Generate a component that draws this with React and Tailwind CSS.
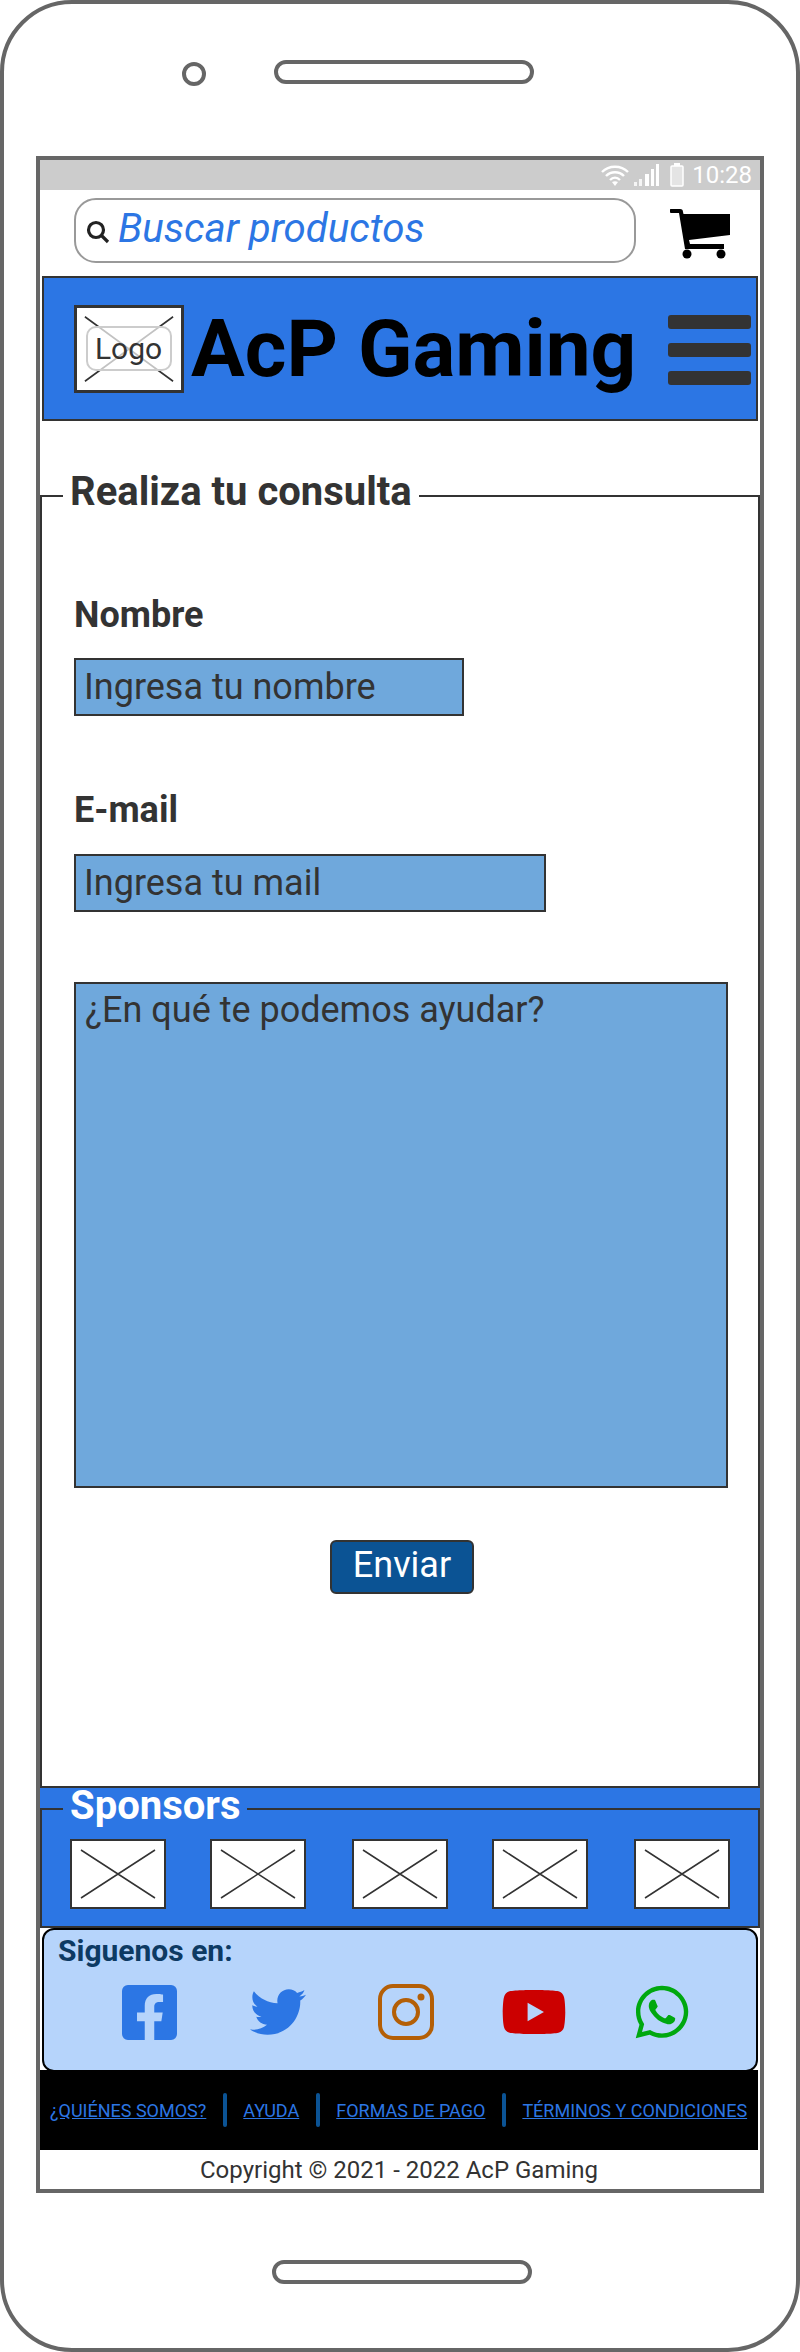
import { FaFacebookSquare, FaTwitter, FaYoutube, FaWhatsapp } from 'react-icons/fa';

const Wifi = () => (
  <svg width="28" height="22" viewBox="0 0 28 22" fill="none" stroke="#fff" strokeWidth="2.4">
    <path d="M1 8 C8 1 20 1 27 8" />
    <path d="M5 12 C10 7 18 7 23 12" />
    <path d="M9 16 C12 13 16 13 19 16" />
    <path d="M11 18 L14 22 L17 18 C15 17 13 17 11 18 Z" fill="#fff" stroke="none" />
  </svg>
);

const Signal = () => (
  <svg width="25" height="22" viewBox="0 0 25 22" fill="#fff">
    <rect x="0" y="18" width="3" height="4" opacity="0.8" />
    <rect x="5" y="15" width="3" height="7" opacity="0.8" />
    <rect x="11" y="10" width="4" height="12" />
    <rect x="17" y="5" width="3" height="17" />
    <rect x="22" y="0" width="3" height="22" />
  </svg>
);

const Battery = () => (
  <svg width="14" height="24" viewBox="0 0 14 24" fill="none" stroke="#fff" strokeWidth="1.5">
    <rect x="4" y="0" width="6" height="3" fill="#fff" stroke="none" />
    <rect x="1" y="3" width="12" height="20" rx="1" fill="#e4e4e4" />
  </svg>
);

const Cart = () => (
  <svg width="60" height="50" viewBox="0 0 60 50" fill="#000">
    <path d="M1 0 H10 C12 0 13 1 13 3 L13.5 5 H60 V26 L19 31 L20 35 H54 V40 H15 L9 4 H1 C-1 4 -1 0 1 0 Z" />
    <circle cx="17" cy="45" r="4.5" />
    <circle cx="51" cy="45" r="4.5" />
  </svg>
);

const CrossBox = ({ className, inset = 10 }) => (
  <svg className={className} viewBox="0 0 92 66" preserveAspectRatio="none" fill="none" stroke="#333" strokeWidth="1.5">
    <path d={`M${inset} ${inset} L${92 - inset} ${66 - inset} M${92 - inset} ${inset} L${inset} ${66 - inset}`} />
  </svg>
);

const Instagram = () => (
  <svg width="56" height="56" viewBox="0 0 56 56" fill="none" stroke="#b45f06" strokeWidth="4">
    <rect x="2" y="2" width="52" height="52" rx="13" />
    <circle cx="28" cy="28" r="12" />
    <circle cx="43" cy="13" r="3.5" fill="#b45f06" stroke="none" />
  </svg>
);

const links = ['¿QUIÉNES SOMOS?', 'AYUDA', 'FORMAS DE PAGO', 'TÉRMINOS Y CONDICIONES'];
const sponsorGaps = ['', 'ml-[44px]', 'ml-[46px]', 'ml-[44px]', 'ml-[46px]'];

export default function App() {
  return (
    <div className="w-[800px] h-[2352px] bg-white font-['Roboto',sans-serif] text-[#333]">
      <div className="h-full border-[4px] border-[#666] rounded-[72px] overflow-hidden">
        <div className="flex items-start gap-[68px] pl-[178px] pt-[56px]">
          <div className="w-[24px] h-[24px] mt-[2px] rounded-full border-[4px] border-[#666]" />
          <div className="w-[260px] h-[24px] rounded-[12px] border-[4px] border-[#666]" />
        </div>

        <div className="ml-[32px] mt-[70px] w-[728px] h-[2037px] border-[4px] border-[#666] flex flex-col">
          <div className="h-[30px] shrink-0 bg-[#ccc] flex items-center justify-end gap-[5px] pr-[8px] text-white text-[24px]">
            <Wifi />
            <Signal />
            <div className="ml-[6px] mr-[3px] flex"><Battery /></div>
            <span className="leading-[30px]">10:28</span>
          </div>

          <div className="h-[86px] shrink-0 flex items-start pt-[8px] pl-[34px]">
            <div className="w-[562px] h-[65px] rounded-[22px] border-2 border-[#999] flex items-center pl-[10px] gap-[8px]">
              <svg width="24" height="24" viewBox="0 0 24 24" fill="none" stroke="#222" strokeWidth="3.2" className="mt-[3px]">
                <circle cx="10" cy="10" r="7.5" />
                <path d="M15.5 15.5 L22 22" />
              </svg>
              <span className="text-[40.25px] italic text-[#2c76e4] leading-none -mt-[3px]">Buscar productos</span>
            </div>
            <div className="ml-[34px] mt-[11px] flex"><Cart /></div>
          </div>

          <div className="h-[145px] shrink-0 mx-[2px] bg-[#2c76e4] border-2 border-[#333] flex items-center pl-[30px]">
            <div className="relative w-[110px] h-[88px] bg-white border-[3px] border-[#333] flex items-center justify-center">
              <CrossBox className="absolute inset-0 w-full h-full" inset={7} />
              <div className="relative w-[86px] h-[45px] pr-[1px] rounded-[10px] border-2 border-[#ccc] bg-white/70 flex items-center justify-center text-[30px]">Logo</div>
            </div>
            <span className="ml-[7px] text-[80px] font-bold text-black leading-none whitespace-nowrap">AcP Gaming</span>
            <div className="ml-[32px] mt-[2px] flex flex-col gap-[14px]">
              <div className="w-[83px] h-[14px] rounded-[3px] bg-[#333]" />
              <div className="w-[83px] h-[14px] rounded-[3px] bg-[#333]" />
              <div className="w-[83px] h-[14px] rounded-[3px] bg-[#333]" />
            </div>
          </div>

          <fieldset className="mt-[51px] h-[1316px] shrink-0 border-2 border-[#333] relative">
            <legend className="ml-[21px] px-[7px] pb-[8px] text-[40px] font-bold leading-[40px]">Realiza tu consulta</legend>
            <div className="flex flex-col items-start pl-[32px] pt-[75px]">
              <label className="text-[36px] font-bold leading-[40px]">Nombre</label>
              <input placeholder="Ingresa tu nombre" className="mt-[23px] w-[390px] h-[58px] bg-[#6fa8dc] border-2 border-[#333] px-[8px] text-[36px] placeholder:text-[#333] outline-none" />
              <label className="mt-[74px] text-[36px] font-bold leading-[40px]">E-mail</label>
              <input placeholder="Ingresa tu mail" className="mt-[24px] w-[472px] h-[58px] bg-[#6fa8dc] border-2 border-[#333] px-[8px] text-[36px] placeholder:text-[#333] outline-none" />
              <textarea placeholder="¿En qué te podemos ayudar?" className="mt-[70px] w-[654px] h-[506px] bg-[#6fa8dc] border-2 border-[#333] px-[9px] pt-[5px] text-[36px] leading-[42px] resize-none placeholder:text-[#333] outline-none" />
              <button className="mt-[52px] ml-[256px] w-[144px] h-[54px] pb-[4px] rounded-[6px] bg-[#0b5394] border-2 border-[#333] text-white text-[36px] leading-none">Enviar</button>
            </div>
          </fieldset>

          <div className="h-[140px] shrink-0 bg-[#2c76e4] flex flex-col">
            <fieldset className="mt-[-2px] h-[142px] border-2 border-[#333]">
              <legend className="ml-[21px] px-[7px] pb-[6px] text-[40px] font-bold leading-[40px] text-white">Sponsors</legend>
              <div className="flex pl-[28px] pt-[7px]">
                {sponsorGaps.map((gap, i) => (
                  <div key={i} className={`${gap} w-[96px] h-[70px] bg-white border-2 border-[#333] flex`}>
                    <CrossBox className="w-full h-full" inset={9} />
                  </div>
                ))}
              </div>
            </fieldset>
          </div>

          <div className="ml-[2px] w-[716px] h-[144px] shrink-0 bg-[#b6d4fb] border-2 border-black rounded-[12px]">
            <div className="pl-[14px] pt-[4px] text-[30px] font-bold leading-[34px] text-[#0d3a63]">Siguenos en:</div>
            <div className="flex gap-[72px] pl-[78px] mt-[16px] items-center h-[56px]">
              <div className="w-[56px] flex justify-center"><FaFacebookSquare className="w-[55px] h-[63px] shrink-0 -translate-x-[1px] text-[#2c76e4]" /></div>
              <div className="w-[56px] flex justify-center"><FaTwitter className="w-[56px] h-[56px] shrink-0 text-[#2c76e4]" /></div>
              <div className="w-[56px] flex justify-center"><Instagram /></div>
              <div className="w-[56px] flex justify-center"><FaYoutube className="w-[66px] h-[66px] shrink-0 text-[#cc0000]" /></div>
              <div className="w-[56px] flex justify-center"><FaWhatsapp className="w-[60px] h-[60px] shrink-0 text-[#00a80f]" /></div>
            </div>
          </div>

          <div className="-mt-[2px] relative w-[718px] h-[80px] shrink-0 bg-black flex items-center pl-[10px] gap-[16.5px]">
            {links.map((l, i) => (
              <div key={l} className="flex items-center gap-[16.5px]">
                {i > 0 && <div className="w-[4px] h-[34px] rounded-full bg-[#0b5394]" />}
                <a href="#" className="text-[18px] text-[#2c76e4] underline whitespace-nowrap">{l}</a>
              </div>
            ))}
          </div>

          <div className="flex-1 flex items-center justify-center text-[24px] pr-[2px]">Copyright © 2021 - 2022 AcP Gaming</div>
        </div>

        <div className="ml-[268px] mt-[67px] w-[260px] h-[24px] rounded-[12px] border-[4px] border-[#666]" />
      </div>
    </div>
  );
}
